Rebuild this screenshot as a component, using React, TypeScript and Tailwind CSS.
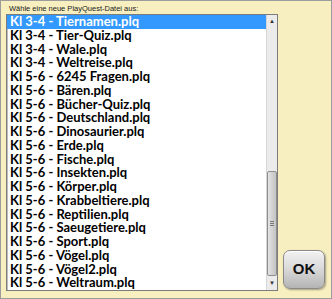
const files = [
  'Kl 3-4 - Tiernamen.plq',
  'Kl 3-4 - Tier-Quiz.plq',
  'Kl 3-4 - Wale.plq',
  'Kl 3-4 - Weltreise.plq',
  'Kl 5-6 - 6245 Fragen.plq',
  'Kl 5-6 - Bären.plq',
  'Kl 5-6 - Bücher-Quiz.plq',
  'Kl 5-6 - Deutschland.plq',
  'Kl 5-6 - Dinosaurier.plq',
  'Kl 5-6 - Erde.plq',
  'Kl 5-6 - Fische.plq',
  'Kl 5-6 - Insekten.plq',
  'Kl 5-6 - Körper.plq',
  'Kl 5-6 - Krabbeltiere.plq',
  'Kl 5-6 - Reptilien.plq',
  'Kl 5-6 - Saeugetiere.plq',
  'Kl 5-6 - Sport.plq',
  'Kl 5-6 - Vögel.plq',
  'Kl 5-6 - Vögel2.plq',
  'Kl 5-6 - Weltraum.plq',
];

export default function App() {
  return (
    <div className="w-[332px] h-[299px] border border-[#9c9c9c] bg-[#f7efbf] flex flex-col pl-[5px] pr-[6px] overflow-hidden">
      <p className="h-[13px] pt-[3px] text-[7.5px] leading-[9px] text-[#222] font-['Liberation_Sans',sans-serif] pl-[3px] whitespace-nowrap">
        Wähle eine neue PlayQuest-Datei aus:
      </p>
      <div className="flex items-end gap-[5px]">
        {/* list box */}
        <div className="w-[272px] h-[277px] border border-[#7c7c7c] shadow-[inset_1px_1px_0_#bdbdbd] bg-white flex overflow-hidden">
          <ul className="flex-1 overflow-hidden font-['Lato',sans-serif] font-bold text-[13px] text-black">
            {files.map((f, i) => (
              <li
                key={f}
                className={`h-[13.75px] leading-[13.75px] pl-[3px] whitespace-nowrap ${
                  i === 0 ? 'bg-[#3399ff] text-white' : ''
                }`}
              >
                {f}
              </li>
            ))}
          </ul>
          {/* scrollbar */}
          <div className="w-[11px] bg-[#ebebeb] border-l border-[#d6d6d6] flex flex-col items-center">
            <div className="h-[12px] flex items-center justify-center text-[6px] text-[#333]">▲</div>
            <div className="flex-1" />
            <div className="w-[10px] h-[105px] rounded-[2px] border border-[#8e8e8e] bg-gradient-to-r from-[#e4e4e4] via-[#d2d2d2] to-[#c4c4c4] flex items-center justify-center">
              <div className="flex flex-col gap-px">
                <span className="block w-[4px] h-px bg-[#777]" />
                <span className="block w-[4px] h-px bg-[#777]" />
                <span className="block w-[4px] h-px bg-[#777]" />
              </div>
            </div>
            <div className="h-[14px] flex items-center justify-center text-[6px] text-[#333]">▼</div>
          </div>
        </div>
        {/* OK button */}
        <button className="mb-[2px] w-[42px] h-[39px] rounded-[7px] border border-[#8a8a8a] bg-gradient-to-b from-[#f2f2f2] via-[#d8d8d8] to-[#b4b4b4] shadow-[inset_0_1px_0_#fff,1px_1px_2px_rgba(0,0,0,0.35)] font-['Liberation_Sans',sans-serif] font-bold text-[15px] text-[#111]">
          OK
        </button>
      </div>
    </div>
  );
}
